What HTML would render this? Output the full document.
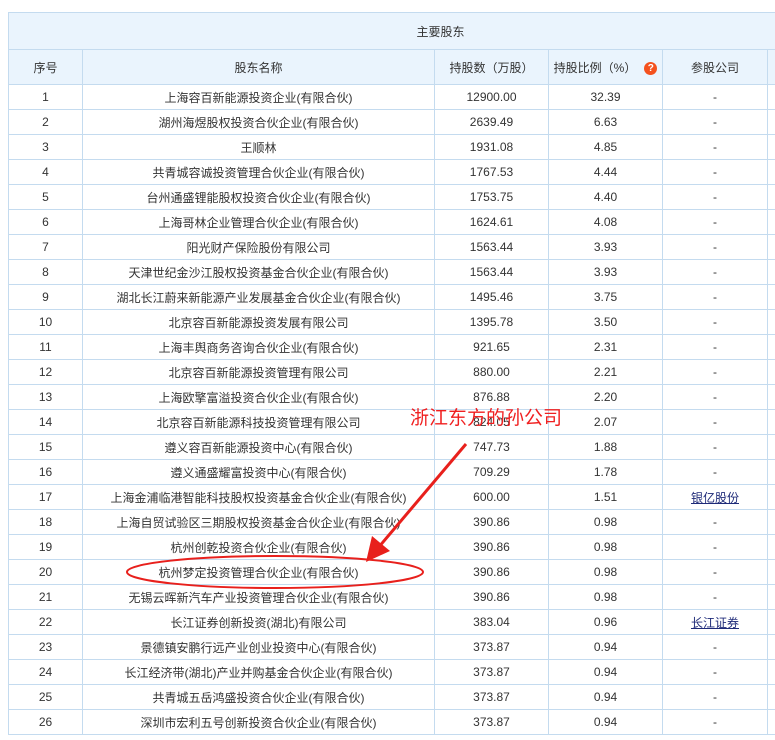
<!DOCTYPE html>
<html><head><meta charset="utf-8"><style>
body{margin:0;background:#fff;width:775px;height:740px;overflow:hidden;position:relative;font-family:"Liberation Sans","Noto Sans CJK SC",sans-serif;font-size:12px;color:#333}
table{position:absolute;left:8px;top:12px;border-collapse:collapse;table-layout:fixed;width:790px}
td,th{border:1px solid #c4dbef;height:24px;padding:0;text-align:center;font-weight:normal;white-space:nowrap;overflow:hidden}
.t th{background:#eaf4fd}
a{color:#1e2a78;text-decoration:underline}
.q{display:inline-block;width:13px;height:13px;border-radius:50%;background:#f4511e;color:#fff;font-size:10px;line-height:13px;font-weight:bold;vertical-align:middle;margin-left:8px}
</style></head><body>
<table class="t">
<colgroup><col style="width:74px"><col style="width:352px"><col style="width:114px"><col style="width:114px"><col style="width:105px"><col style="width:31px"></colgroup>
<tr><th colspan="6" style="height:36px;padding-left:74px">主要股东</th></tr>
<tr><th style="height:34px">序号</th><th>股东名称</th><th>持股数（万股）</th><th>持股比例（%）<span class="q">?</span></th><th>参股公司</th><th></th></tr>
<tr><td>1</td><td>上海容百新能源投资企业(有限合伙)</td><td>12900.00</td><td>32.39</td><td>-</td><td></td></tr>
<tr><td>2</td><td>湖州海煜股权投资合伙企业(有限合伙)</td><td>2639.49</td><td>6.63</td><td>-</td><td></td></tr>
<tr><td>3</td><td>王顺林</td><td>1931.08</td><td>4.85</td><td>-</td><td></td></tr>
<tr><td>4</td><td>共青城容诚投资管理合伙企业(有限合伙)</td><td>1767.53</td><td>4.44</td><td>-</td><td></td></tr>
<tr><td>5</td><td>台州通盛锂能股权投资合伙企业(有限合伙)</td><td>1753.75</td><td>4.40</td><td>-</td><td></td></tr>
<tr><td>6</td><td>上海哥林企业管理合伙企业(有限合伙)</td><td>1624.61</td><td>4.08</td><td>-</td><td></td></tr>
<tr><td>7</td><td>阳光财产保险股份有限公司</td><td>1563.44</td><td>3.93</td><td>-</td><td></td></tr>
<tr><td>8</td><td>天津世纪金沙江股权投资基金合伙企业(有限合伙)</td><td>1563.44</td><td>3.93</td><td>-</td><td></td></tr>
<tr><td>9</td><td>湖北长江蔚来新能源产业发展基金合伙企业(有限合伙)</td><td>1495.46</td><td>3.75</td><td>-</td><td></td></tr>
<tr><td>10</td><td>北京容百新能源投资发展有限公司</td><td>1395.78</td><td>3.50</td><td>-</td><td></td></tr>
<tr><td>11</td><td>上海丰舆商务咨询合伙企业(有限合伙)</td><td>921.65</td><td>2.31</td><td>-</td><td></td></tr>
<tr><td>12</td><td>北京容百新能源投资管理有限公司</td><td>880.00</td><td>2.21</td><td>-</td><td></td></tr>
<tr><td>13</td><td>上海欧擎富溢投资合伙企业(有限合伙)</td><td>876.88</td><td>2.20</td><td>-</td><td></td></tr>
<tr><td>14</td><td>北京容百新能源科技投资管理有限公司</td><td>824.05</td><td>2.07</td><td>-</td><td></td></tr>
<tr><td>15</td><td>遵义容百新能源投资中心(有限合伙)</td><td>747.73</td><td>1.88</td><td>-</td><td></td></tr>
<tr><td>16</td><td>遵义通盛耀富投资中心(有限合伙)</td><td>709.29</td><td>1.78</td><td>-</td><td></td></tr>
<tr><td>17</td><td>上海金浦临港智能科技股权投资基金合伙企业(有限合伙)</td><td>600.00</td><td>1.51</td><td><a>银亿股份</a></td><td></td></tr>
<tr><td>18</td><td>上海自贸试验区三期股权投资基金合伙企业(有限合伙)</td><td>390.86</td><td>0.98</td><td>-</td><td></td></tr>
<tr><td>19</td><td>杭州创乾投资合伙企业(有限合伙)</td><td>390.86</td><td>0.98</td><td>-</td><td></td></tr>
<tr><td>20</td><td>杭州梦定投资管理合伙企业(有限合伙)</td><td>390.86</td><td>0.98</td><td>-</td><td></td></tr>
<tr><td>21</td><td>无锡云晖新汽车产业投资管理合伙企业(有限合伙)</td><td>390.86</td><td>0.98</td><td>-</td><td></td></tr>
<tr><td>22</td><td>长江证券创新投资(湖北)有限公司</td><td>383.04</td><td>0.96</td><td><a>长江证券</a></td><td></td></tr>
<tr><td>23</td><td>景德镇安鹏行远产业创业投资中心(有限合伙)</td><td>373.87</td><td>0.94</td><td>-</td><td></td></tr>
<tr><td>24</td><td>长江经济带(湖北)产业并购基金合伙企业(有限合伙)</td><td>373.87</td><td>0.94</td><td>-</td><td></td></tr>
<tr><td>25</td><td>共青城五岳鸿盛投资合伙企业(有限合伙)</td><td>373.87</td><td>0.94</td><td>-</td><td></td></tr>
<tr><td>26</td><td>深圳市宏利五号创新投资合伙企业(有限合伙)</td><td>373.87</td><td>0.94</td><td>-</td><td></td></tr>
</table>
<div style="position:absolute;left:410px;top:406px;color:#f02020;font-size:19px;line-height:26px;">浙江东方的孙公司</div>
<svg style="position:absolute;left:0;top:0" width="775" height="740">
<ellipse cx="275" cy="572" rx="148" ry="16" fill="none" stroke="#e8201c" stroke-width="2"/>
<line x1="466" y1="444" x2="378" y2="548" stroke="#e8201c" stroke-width="3"/>
<polygon points="366,562 372,536 390,551" fill="#e8201c"/>
</svg>
</body></html>
